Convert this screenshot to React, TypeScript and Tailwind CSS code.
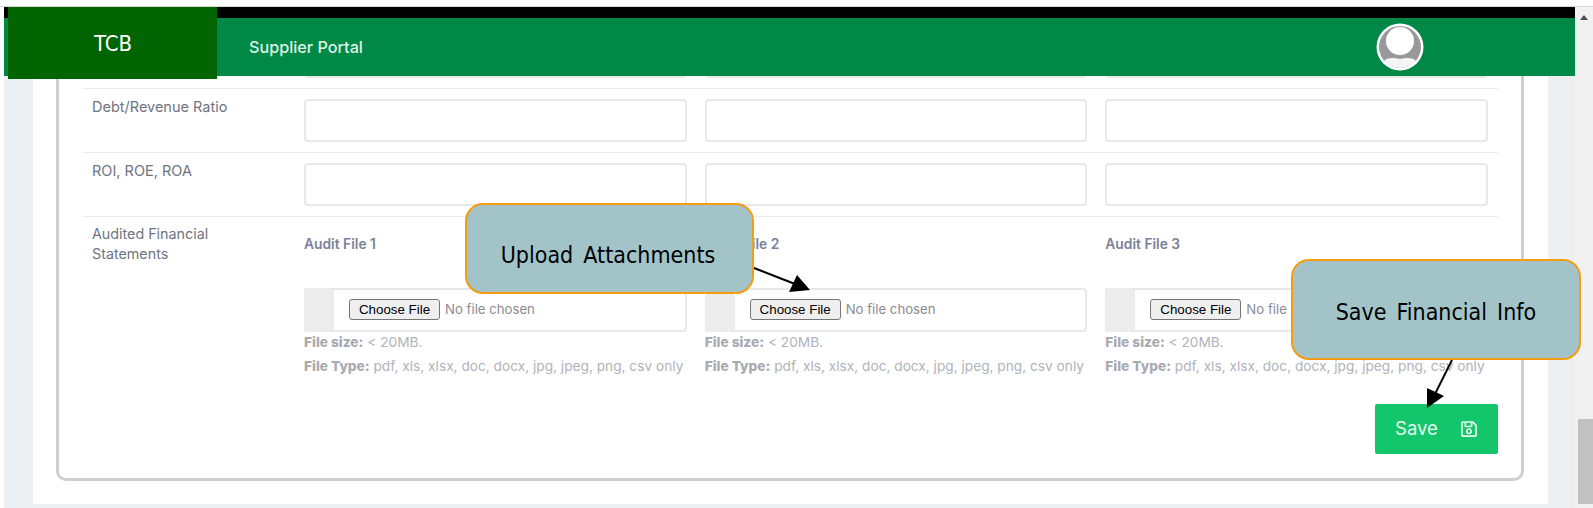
import React from "react";
import { FaRegSave } from "react-icons/fa";

const body = { fontFamily: '"Inter", "Noto Sans", sans-serif' };
const callout = { fontFamily: '"DejaVu Sans Condensed", "DejaVu Sans", "Open Sans", sans-serif' };

function TextRow({ label }: { label: string }) {
  return (
    <div className="flex border-b border-[#ececec] py-[10px] pl-[10px]">
      <div className="-mt-[2px] w-[212px] text-[14.5px] leading-[20px] text-[#6f7480]">{label}</div>
      <div className="grid flex-1 grid-cols-3 gap-[18px] pr-[10px]">
        {[0, 1, 2].map((i) => (
          <input key={i} className="h-[43px] w-full rounded-[4px] border-2 border-[#e8e8e8] bg-white" aria-label={label || "value"} />
        ))}
      </div>
    </div>
  );
}

function FileColumn({ n }: { n: number }) {
  return (
    <div>
      <div className="mt-[17px] text-[13.8px] font-semibold leading-[20px] text-[#7a8299]">Audit File {n}</div>
      <div className="mt-[34px] flex h-[44px] items-center rounded-r-[4px] border-2 border-[#e8e8e8] border-l-[30px] border-l-[#ececec] bg-white pb-[2px]">
        <input
          type="file"
          className="ml-[15px] w-full text-[13.2px] text-[#8b8b92] file:mr-[5px] file:h-[21px] file:w-[91px] file:cursor-pointer file:rounded-[3px] file:border file:border-[#767676] file:bg-[#efefef] file:text-[13.33px] file:text-black file:[font-family:'Liberation_Sans',sans-serif]"
        />
      </div>
      <div className="text-[13.7px] leading-[20px] text-[#b0b3b9]">
        <b className="font-extrabold text-[#a8abb2]">File size:</b> &lt; 20MB.
      </div>
      <div className="mt-[4px] whitespace-nowrap text-[13.7px] leading-[20px] text-[#b0b3b9]">
        <b className="font-extrabold text-[#a8abb2]">File Type:</b> pdf, xls, xlsx, doc, docx, jpg, jpeg, png, csv only
      </div>
    </div>
  );
}

function Callout({ children, className }: { children: React.ReactNode; className: string }) {
  return (
    <div
      style={callout}
      className={`absolute z-20 flex items-center justify-center rounded-[18px] border-[2px] border-[#f59c12] bg-[#a2c4c9] text-[23px] text-black font-stretch-condensed [word-spacing:3.5px] ${className}`}
    >
      {children}
    </div>
  );
}

export default function App() {
  return (
    <div style={body} className="relative flex h-[508px] w-[1593px] flex-col overflow-hidden bg-white">
      <div className="h-[7px] shrink-0 border-b border-[#d8d8d8]" />
      <div className="flex min-h-0 flex-1">
        <div className="flex min-w-0 flex-1 flex-col pl-[4px]">
          <div className="h-[11px] shrink-0 bg-black" />
          <header className="relative z-10 flex h-[58px] shrink-0 items-center justify-between bg-[#008847] pl-[245px] pr-[151px]">
            <span className="text-[16.2px] font-medium text-[#dff3e6]">Supplier Portal</span>
            <svg width="48" height="48" viewBox="0 0 48 48" className="mt-[-1px]">
              <circle cx="24" cy="24" r="23.5" fill="#fff" />
              <circle cx="24" cy="24" r="21" fill="#999" />
              <circle cx="24" cy="18" r="14" fill="#fff" />
              <path d="M8 38c4-4 10-3 16-2 6-1 12-2 16 2-3 4-9 7-16 7s-13-3-16-7z" fill="#f4f4f4" />
            </svg>
          </header>
          <div className="flex min-h-0 flex-1 bg-[#ecf0f3] pb-[4px] pl-[29px] pr-[27px]">
            <div className="min-h-0 flex-1 overflow-hidden bg-white pl-[23px] pr-[24px]">
              <div className="-mt-[54px] rounded-[10px] border-[3px] border-[#cfcfcf] px-[23px] pb-[24px]">
                <TextRow label="" />
                <TextRow label="Debt/Revenue Ratio" />
                <TextRow label="ROI, ROE, ROA" />
                <div className="flex pl-[10px]">
                  <div className="w-[212px] pt-[7px] text-[14.3px] leading-[20px] text-[#6f7480]">
                    Audited Financial
                    <br />
                    Statements
                  </div>
                  <div className="grid flex-1 grid-cols-3 gap-[18px] pr-[10px]">
                    <FileColumn n={1} />
                    <FileColumn n={2} />
                    <FileColumn n={3} />
                  </div>
                </div>
                <div className="mt-[28px] flex justify-end">
                  <button className="flex h-[50px] w-[123px] items-center justify-center gap-[22px] rounded-[2px] bg-[#13c56b] text-[18.5px] text-[#e6faef]">
                    Save
                    <FaRegSave className="h-[18px] w-[18px]" />
                  </button>
                </div>
              </div>
            </div>
          </div>
        </div>
        <div className="relative w-[18px] shrink-0 bg-[#f1f1f1]">
          <div className="absolute left-[5px] top-[8px] h-0 w-0 border-x-[4px] border-b-[5px] border-x-transparent border-b-[#505050]" />
          <div className="absolute bottom-[4px] left-[3px] top-[412px] w-[15px] bg-[#c1c1c1]" />
        </div>
      </div>
      <div className="absolute left-[8px] top-[7px] z-20 flex h-[72px] w-[209px] items-center bg-[#006400] pl-[86px] text-[22px] text-white font-stretch-condensed" style={callout}>
        TCB
      </div>
      <Callout className="left-[465px] top-[203px] h-[91px] w-[289px] pr-[3px] pt-[14px]">Upload Attachments</Callout>
      <Callout className="left-[1291px] top-[259px] h-[101px] w-[290px] pt-[6px]">Save Financial Info</Callout>
      <svg className="pointer-events-none absolute left-0 top-0 z-10" width="1593" height="508">
        <line x1="754" y1="268" x2="795" y2="284" stroke="#000" strokeWidth="2" />
        <polygon points="810,290 789,292 797,275" fill="#000" />
        <line x1="1452" y1="360" x2="1435" y2="394" stroke="#000" strokeWidth="2" />
        <polygon points="1427,408 1427,388 1444,396" fill="#000" />
      </svg>
    </div>
  );
}
